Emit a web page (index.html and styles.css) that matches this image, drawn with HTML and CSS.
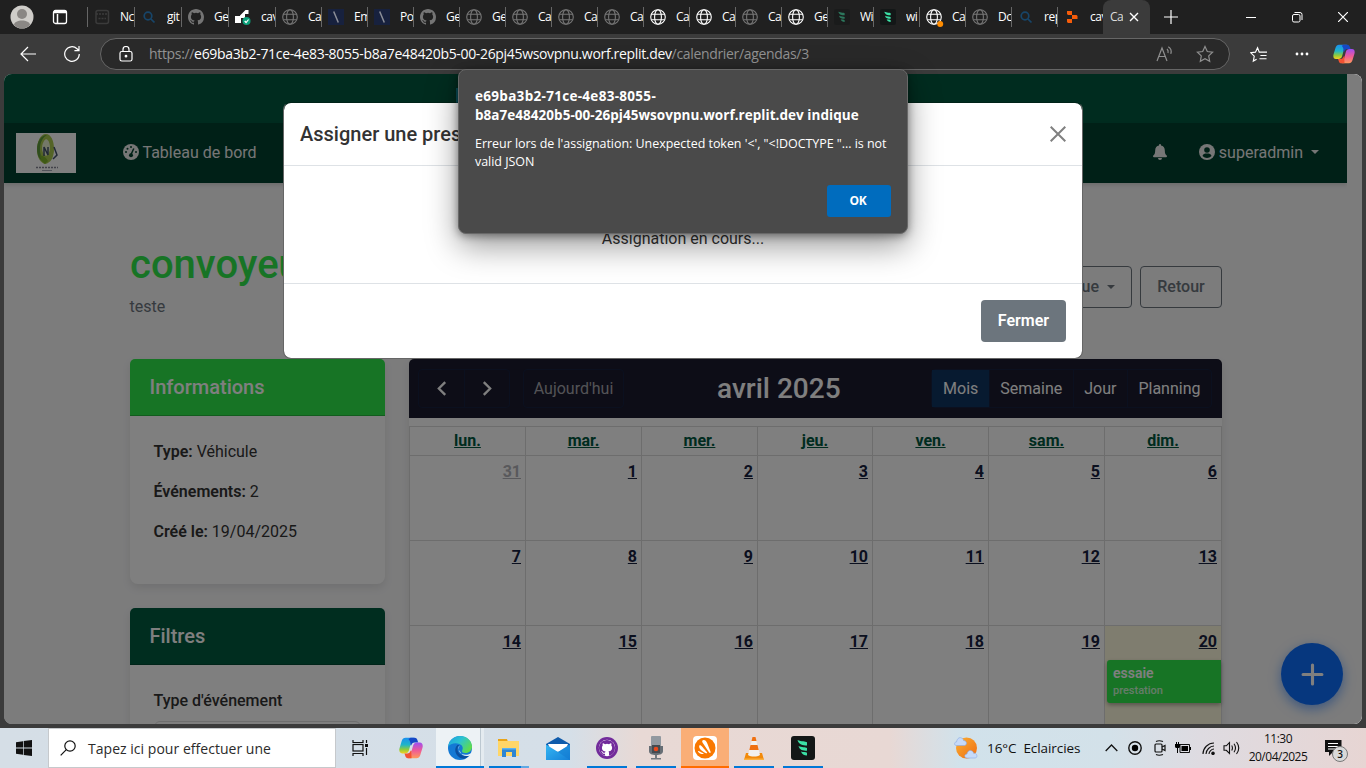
FILE: index.html
```html
<!DOCTYPE html>
<html lang="fr">
<head>
<meta charset="utf-8">
<title>Calendrier</title>
<link rel="stylesheet" href="styles.css">
</head>
<body>
<svg class="defs" width="0" height="0">
  <defs>
    <linearGradient id="cp1" x1="0" y1="0" x2="0" y2="1"><stop offset="0" stop-color="#1b8ff0"/><stop offset=".45" stop-color="#1fb5c8"/><stop offset=".75" stop-color="#8fcb3c"/><stop offset="1" stop-color="#f3d021"/></linearGradient>
    <linearGradient id="cp2" x1="0" y1="0" x2="0" y2="1"><stop offset="0" stop-color="#a04df0"/><stop offset=".5" stop-color="#ee5a97"/><stop offset="1" stop-color="#ff9a5a"/></linearGradient>
    <linearGradient id="edge1" x1="0" y1="0" x2="1" y2=".6"><stop offset="0" stop-color="#1b9de2"/><stop offset=".5" stop-color="#2cc3d0"/><stop offset="1" stop-color="#5fdc4c"/></linearGradient>
    <linearGradient id="sun" x1="0" y1="0" x2="1" y2="1"><stop offset="0" stop-color="#fbb034"/><stop offset="1" stop-color="#ee6c12"/></linearGradient>
    <linearGradient id="mailg" x1="0" y1="0" x2="1" y2="1"><stop offset="0" stop-color="#35b7f3"/><stop offset="1" stop-color="#1480d8"/></linearGradient>
  </defs>
  <symbol id="globe" viewBox="0 0 16 16"><g fill="none" stroke="currentColor" stroke-width="1.1"><circle cx="8" cy="8" r="7.3"/><ellipse cx="8" cy="8" rx="3.4" ry="7.3"/><path d="M1.4 5.3h13.2M1.4 10.7h13.2"/></g></symbol>
  <symbol id="github" viewBox="0 0 16 16"><path fill="currentColor" d="M8 0C3.58 0 0 3.58 0 8c0 3.54 2.29 6.53 5.47 7.59.4.07.55-.17.55-.38v-1.49c-2.23.49-2.69-.94-2.69-.94-.36-.92-.89-1.17-.89-1.17-.72-.5.06-.49.06-.49.8.06 1.23.83 1.23.83.71 1.22 1.87.87 2.33.66.07-.52.28-.87.5-1.07-1.77-.2-3.64-.89-3.64-3.95 0-.87.31-1.59.82-2.15-.08-.2-.36-1.02.08-2.12 0 0 .67-.21 2.2.82a7.6 7.6 0 0 1 4 0c1.53-1.04 2.2-.82 2.2-.82.44 1.1.16 1.92.08 2.12.51.56.82 1.27.82 2.15 0 3.07-1.87 3.75-3.65 3.95.29.25.54.73.54 1.48v2.19c0 .21.15.46.55.38A8 8 0 0 0 16 8c0-4.42-3.58-8-8-8z"/></symbol>
  <symbol id="search" viewBox="0 0 16 16"><g fill="none" stroke="currentColor" stroke-width="1.7"><circle cx="7" cy="7" r="3.8"/><path d="M9.8 9.8 13.500 13.500"/></g></symbol>
  <symbol id="slash" viewBox="0 0 16 16"><path fill="#17213e" d="M0 0h16v16H0z"/><path stroke="#8c8f98" stroke-width="1.5" d="M5.700 2.500 10.300 13.500"/></symbol>
  <symbol id="leaf" viewBox="0 0 24 24"><rect width="24" height="24" rx="3" fill="#131717"/><path fill="#3be0a5" d="M6.500 4c4 1.800 8 1 9.500 2.300v3.200C12 9.500 7.500 8.500 6.500 4zm1 6c3 1.700 7 .8 8.500 2v2.800c-4 0-7.500-.8-8.500-4.800zm2.500 5.500c2 .8 5 .3 6 1.200v2.800c-3 0-5.200-1.200-6-4z"/></symbol>
  <symbol id="copilot" viewBox="0 0 24 22"><path fill="url(#cp1)" d="M6.500.7h9c-2.300 0-3 3.200-4 7l-1.600 5.700c-.6 2-1.900 3-3.900 3H3.200C.6 16.400-.3 14 .6 11L2.700 4C3.400 1.700 4.700.7 6.500.7z"/><path fill="#1648c6" d="M11.500.7h4.200c1.600 0 2.400 1.100 3 3.200l.5 1.700h-3.500c-2 0-2.800 1-3.300 2.700l-1 0C12 4.600 10.200 3 9.500 2z"/><path fill="url(#cp2)" d="M17.500 21.300h-9c2.300 0 3-3.200 4-7l1.600-5.700c.6-2 1.900-3 3.900-3h2.800c2.600 0 3.500 2.400 2.600 5.400L21.300 18c-.7 2.300-2 3.300-3.800 3.300z"/><path fill="#f25232" d="M12.500 21.300H9c-1.600 0-2.400-1.100-3-3.200l-.5-1.700h2.700c2 0 2.800-1 3.300-2.700h1.200c-.8 3 .1 5.600-.2 7.600z"/></symbol>
</svg>

<header class="tabstrip">
  <svg class="avatar" viewBox="0 0 24 24"><circle cx="12" cy="12" r="11.500" fill="#cfcdc9"/><circle cx="12" cy="9" r="5" fill="#8a8784"/><path d="M4 20c0-6 16-6 16 0-4 4.500-12 4.500-16 0z" fill="#8a8784"/></svg>
  <svg class="tabmenu" viewBox="0 0 16 16" fill="none" stroke="#fff" stroke-width="1.300"><rect x="1.500" y="1.500" width="13" height="13" rx="2"/><path d="M2 3.500h12M5.500 5v9" stroke-width="1.500"/><path d="M2 2.500h12" stroke-width="2"/></svg>
  <nav class="tabs">
    <div class="tab wide"><svg class="ti" viewBox="0 0 16 16" fill="none" stroke="#3b3b3b" stroke-width="1.500"><rect x="2" y="1.500" width="12.500" height="13" rx="2"/><path d="M2 5h12.500M4.500 9.500h7.500" stroke-dasharray="2 1"/></svg><span>Nc</span></div>
    <div class="tab wide"><svg class="ti navy"><use href="#search"/></svg><span>git</span></div>
    <div class="tab wide"><svg class="ti dim"><use href="#github"/></svg><span>Ge</span></div>
    <div class="tab wide"><svg class="ti" viewBox="0 0 16 16"><path fill="#fff" d="M5 6.500 9.500 2l1-1h3v4H10v4H6v5H0V7h5z"/><circle cx="11.500" cy="12" r="4" fill="#0aa07a"/><path d="m9.700 12 1.400 1.500 2.400-3" fill="none" stroke="#fff" stroke-width="1.200"/></svg><span>cav</span></div>
    <div class="tab"><svg class="ti dim"><use href="#globe"/></svg><span>Ca</span></div>
    <div class="tab"><svg class="ti"><use href="#slash"/></svg><span>Em</span></div>
    <div class="tab"><svg class="ti"><use href="#slash"/></svg><span>Po</span></div>
    <div class="tab"><svg class="ti dim"><use href="#github"/></svg><span>Ge</span></div>
    <div class="tab"><svg class="ti dim"><use href="#globe"/></svg><span>Ge</span></div>
    <div class="tab"><svg class="ti dim"><use href="#globe"/></svg><span>Ca</span></div>
    <div class="tab"><svg class="ti dim"><use href="#globe"/></svg><span>Ca</span></div>
    <div class="tab"><svg class="ti dim"><use href="#globe"/></svg><span>Ca</span></div>
    <div class="tab"><svg class="ti"><use href="#globe"/></svg><span>Ca</span></div>
    <div class="tab"><svg class="ti"><use href="#globe"/></svg><span>Ca</span></div>
    <div class="tab"><svg class="ti dim"><use href="#globe"/></svg><span>Ca</span></div>
    <div class="tab"><svg class="ti"><use href="#globe"/></svg><span>Ge</span></div>
    <div class="tab"><svg class="ti half"><use href="#leaf"/></svg><span>Wi</span></div>
    <div class="tab"><svg class="ti"><use href="#leaf"/></svg><span>wi</span></div>
    <div class="tab"><svg class="ti over" viewBox="0 0 16 16"><use href="#globe" width="16" height="16"/><circle cx="14.200" cy="14.900" r="3" fill="#ff8c00"/></svg><span>Ca</span></div>
    <div class="tab"><svg class="ti dim"><use href="#globe"/></svg><span>Dc</span></div>
    <div class="tab"><svg class="ti navy"><use href="#search"/></svg><span>rep</span></div>
    <div class="tab last"><svg class="ti" viewBox="0 0 16 16" fill="#f65c0a"><path d="M3 2h5v4H4L3 5zM8 6h4.500l1 1v3H8zM3 10h5v4H4l-1-1z"/></svg><span>cav</span></div>
    <div class="tab active"><span>Ca</span><svg class="tx" viewBox="0 0 10 10" stroke="#fff" stroke-width="1.400"><path d="m1 1 8 8M9 1 1 9"/></svg></div>
  </nav>
  <svg class="newtab" viewBox="0 0 14 14" stroke="#fff" stroke-width="1.200"><path d="M7 0v14M0 7h14"/></svg>
  <div class="winctl">
    <svg viewBox="0 0 10 10" stroke="#fff"><path d="M0 5.500h10"/></svg>
    <svg viewBox="0 0 10 10" stroke="#fff" fill="none" overflow="visible"><rect x=".5" y="2.500" width="7.500" height="7.500" rx="1.500"/><path d="M2.500.5H8a2 2 0 0 1 2 2V8"/></svg>
    <svg viewBox="0 0 10 10" stroke="#fff" stroke-width="1.200"><path d="m0 0 10 10M10 0 0 10"/></svg>
  </div>
</header>

<div class="toolbar">
  <svg class="back" viewBox="0 0 16 16" fill="none" stroke="#fff" stroke-width="1.200"><path d="M16 8H1M8 1 1 8l7 7"/></svg>
  <svg class="reload" viewBox="0 0 16 16" fill="none" stroke="#fff" stroke-width="1.200"><path d="M15.300 8A7.300 7.300 0 1 1 13 2.700l1.700 1.600M15 0v4.600h-4.600"/></svg>
  <div class="address">
    <svg class="lock" viewBox="0 0 14 16" fill="none" stroke="#fff" stroke-width="1.200"><rect x="1" y="5.500" width="12" height="9.500" rx="1.800"/><path d="M4 5.500V3.500a3 3 0 0 1 6 0v2"/><circle cx="7" cy="10.200" r=".8" fill="#fff"/></svg>
    <div class="url">https://<b>e69ba3b2-71ce-4e83-8055-b8a7e48420b5-00-26pj45wsovpnu.worf.replit.dev</b>/calendrier/agendas/3</div>
    <svg class="read" viewBox="0 0 18 16" fill="none" stroke="#8f8f8f" stroke-width="1.200"><path d="M1 15 6 2l5 13M3 10.500h6M11 3c1.200 1 1.400 2.300 1 4M12.300.8c2.600 1.500 3.400 4 2.500 7"/></svg>
    <svg class="star" viewBox="0 0 18 18" fill="none" stroke="#8f8f8f" stroke-width="1.200"><path d="m9 1.500 2.300 5 5.300.7-3.900 3.700 1 5.400L9 13.700l-4.700 2.600 1-5.400L1.400 7.200l5.300-.7z"/></svg>
  </div>
  <svg class="favs" viewBox="0 0 18 18" fill="none" stroke="#fff" stroke-width="1.200"><path d="M11 6.500H9.800L8 1.800 5.800 6.500l-5 .7 3.700 3.600-1 5.200L7 14M11 6.500h7M11 10h6.500M10 13.500h7.500"/></svg>
  <svg class="dots" viewBox="0 0 14 4" fill="#fff"><circle cx="2" cy="2" r="1.400"/><circle cx="7" cy="2" r="1.400"/><circle cx="12" cy="2" r="1.400"/></svg>
  <svg class="cop"><use href="#copilot"/></svg>
</div>

<main class="viewport">
  <div class="page">
    <div class="topbar"><div class="topbtn"></div></div>
    <div class="navbar">
      <svg class="logo" viewBox="0 0 60 40"><path fill="#fff" d="M0 0h60v40H0z"/><path fill="#a9c94e" d="M30 1c-6 0-9 8-9 16s4 13 8 14c6-1 9-7 9-15S35 1 30 1z"/><path fill="#5f9a3a" d="M31 2c-4 2-7 7-7 14 0 6 2 10 5 13-5-1-8-6-8-13S25 2 31 2z"/><path fill="#e8f0d0" d="M30 6c3 1 4 5 4 9s-2 7-4 8c-3-2-4-5-4-8s1-7 4-9z"/><path fill="#7fb52a" d="M24 22c3 1 6 2 8 6l-3 3c-3-2-5-5-5-9z"/><path fill="none" stroke="#43536a" stroke-width="1.500" d="M28 23v-9l4 8v-8M37 26l4-4-3-8"/><path stroke="#858593" stroke-width="1.500" stroke-dasharray="2 1" d="M20 34.500h22"/><path stroke="#a5a9b7" d="M26 37.500h10"/></svg>
      <div class="navlink"><svg viewBox="0 0 16 16"><circle cx="8" cy="8" r="8" fill="currentColor"/><path d="m7.800 11 3-6.500" stroke="#00402d" stroke-width="1.500"/><circle cx="8" cy="11.300" r="2" fill="#00402d"/><g fill="#00402d"><circle cx="8" cy="3" r="1"/><circle cx="4.500" cy="4.700" r="1"/><circle cx="3" cy="8" r="1"/><circle cx="13" cy="8" r="1"/></g></svg>Tableau de bord</div>
      <svg class="bell" viewBox="0 0 14 16" fill="currentColor"><path d="M7 0a1 1 0 0 0-1 1v.6C3.700 2 2.200 3.900 2.200 6.200c0 3-.7 4.300-1.900 5.400-.6.700-.2 1.600.7 1.600h12c.9 0 1.300-.9.700-1.600-1.200-1.100-1.900-2.400-1.900-5.400C11.800 3.900 10.300 2 8 1.600V1a1 1 0 0 0-1-1zM5 14a2 2 0 0 0 4 0z"/></svg>
      <div class="user"><svg viewBox="0 0 16 16"><circle cx="8" cy="8" r="8" fill="currentColor"/><circle cx="8" cy="6" r="2.800" fill="#00402d"/><path d="M3.500 12c.5-2 2-2.500 4.500-2.500s4 .5 4.500 2.500c-2.500 2.500-6.500 2.500-9 0z" fill="#00402d"/></svg>superadmin<i class="caret"></i></div>
    </div>
    <div class="container">
      <div class="heading">
        <div><h1>convoyeur</h1><p>teste</p></div>
        <div class="btns"><span class="btn">Vue publique<i class="caret"></i></span><span class="btn ret">Retour</span></div>
      </div>
      <div class="columns">
        <aside>
          <section class="card info"><h5 class="green">Informations</h5><div class="body"><p><b>Type:</b> Véhicule</p><p><b>Événements:</b> 2</p><p><b>Créé le:</b> 19/04/2025</p></div></section>
          <section class="card"><h5 class="dark">Filtres</h5><div class="body filter"><label>Type d'événement</label><div class="select"></div></div></section>
        </aside>
        <section class="cal">
          <div class="caltool">
            <div class="group nav"><span><svg viewBox="0 0 10 16"><path d="m8.500 2-6 6 6 6"/></svg></span><span><svg viewBox="0 0 10 16"><path d="m1.500 2 6 6-6 6"/></svg></span></div>
            <div class="group today"><span>Aujourd'hui</span></div>
            <h2>avril 2025</h2>
            <div class="group views"><span class="on">Mois</span><span>Semaine</span><span>Jour</span><span>Planning</span></div>
          </div>
          <div class="grid">
            <div class="h">lun.</div><div class="h">mar.</div><div class="h">mer.</div><div class="h">jeu.</div><div class="h">ven.</div><div class="h">sam.</div><div class="h">dim.</div>
            <div class="d off"><u>31</u></div><div class="d"><u>1</u></div><div class="d"><u>2</u></div><div class="d"><u>3</u></div><div class="d"><u>4</u></div><div class="d"><u>5</u></div><div class="d"><u>6</u></div>
            <div class="d"><u>7</u></div><div class="d"><u>8</u></div><div class="d"><u>9</u></div><div class="d"><u>10</u></div><div class="d"><u>11</u></div><div class="d"><u>12</u></div><div class="d"><u>13</u></div>
            <div class="d"><u>14</u></div><div class="d"><u>15</u></div><div class="d"><u>16</u></div><div class="d"><u>17</u></div><div class="d"><u>18</u></div><div class="d"><u>19</u></div><div class="d now"><u>20</u><div class="event"><b>essaie</b><small>prestation</small></div></div>
          </div>
        </section>
      </div>
    </div>
  </div>
  <div class="scroll"></div>
  <div class="fab"><svg viewBox="0 0 22 22" stroke="#fff" stroke-width="3" stroke-linecap="round"><path d="M11 2v18M2 11h18"/></svg></div>
  <div class="backdrop"></div>
  <div class="modal">
    <div class="mhead"><h5>Assigner une prestation</h5><svg viewBox="0 0 16 16" stroke="#808080" stroke-width="2"><path d="m.7.7 14.600 14.600M15.300.7.7 15.300"/></svg></div>
    <div class="mbody">Assignation en cours...</div>
    <div class="mfoot"><span>Fermer</span></div>
  </div>
</main>
<div class="alert">
  <h3><span class="l1">e69ba3b2-71ce-4e83-8055-</span><br><span class="l2">b8a7e48420b5-00-26pj45wsovpnu.worf.replit.dev indique</span></h3>
  <p>Erreur lors de l'assignation: Unexpected token '&lt;', "&lt;!DOCTYPE "... is not<br>valid JSON</p>
  <span class="ok">OK</span>
</div>

<footer class="taskbar">
  <div class="start"><svg viewBox="0 0 16 16" fill="#111"><path d="M0 2.200 7 1.200V7.600H0zM7.700 1.100 16 0v7.600H7.700zM0 8.400h7v6.400l-7-1zM7.700 8.400H16V16l-8.300-1.100z"/></svg></div>
  <div class="find"><svg viewBox="0 0 16 16" fill="none" stroke="#111" stroke-width="1.200"><circle cx="10" cy="6" r="5.200"/><path d="M6.300 9.700.7 15.300"/></svg>Tapez ici pour effectuer une</div>
  <div class="app view"><svg width="17" height="16" viewBox="0 0 17 16" fill="none" stroke="#111" stroke-width="1.200"><path d="M1 0v2.500h10V0M1 16v-2.500h10V16M14.500 0v3M14.500 8v7"/><rect x="1" y="4.500" width="10" height="6.500"/><path fill="#111" stroke="none" d="M13 4h3v3h-3z"/></svg></div>
  <div class="app"><svg width="24" height="22"><use href="#copilot"/></svg></div>
  <div class="app on"><svg width="24" height="24" viewBox="0 0 24 24"><circle cx="12" cy="12" r="12" fill="#1479d4"/><path fill="url(#edge1)" d="M0 11C1 4 6 0 12 0c7 0 12 5 12 10.500 0 4-3 6.500-6.500 6.500-3 0-4-1.300-3.300-2.700 1-1.800.9-4.800-2.700-6.300C7.500 6.500 2 7.500 0 11z"/><path fill="#0b4f9f" d="M9.500 9c-3.500 3-3 9 2 12.500 3 2 7 1.500 10-2.500-5 2.500-12-.5-12-6 0-2 .8-3 2-4z"/><path fill="#eef3f6" d="M12 9.500c-2 1.500-2 6 1.500 8.200 3.500 2.100 7.500 1 10.500-1.200v1.800c-1.300 1-2.200 1-2.800 1.500-4 1-7.700-.5-9-4C9.700 13 10 10.500 12 9.500z"/></svg></div>
  <div class="app run two"><svg width="22" height="20" viewBox="0 0 22 20"><path fill="#e9a418" d="M0 1h9l1 3H0z"/><path fill="#ffd667" d="M0 3h21v15H0z"/><path fill="#2e86d3" d="M4 10h14v9h-4v-5H8v5H4z"/><path fill="#5ab3f0" d="M4 10h14v1.500H4z"/></svg></div>
  <div class="app"><svg width="24" height="23" viewBox="0 0 24 23"><path fill="#0e5bab" d="M0 7 12 0l12 7v5H0z"/><path fill="#fff" d="M2 7h20l-3 7H5z"/><path fill="url(#mailg)" d="M0 7.500 12 15l12-7.500V23H0z"/><path fill="#1279cf" opacity=".5" d="m12 15 12 8V7.500z"/></svg></div>
  <div class="app run"><svg width="22" height="22" viewBox="0 0 22 22"><circle cx="11" cy="11" r="11" fill="#722b9b"/><circle cx="11" cy="11" r="8.200" fill="#fff"/><svg x="3" y="3" width="16" height="16" color="#722b9b"><use href="#github"/></svg></svg></div>
  <div class="app run"><svg width="16" height="24" viewBox="0 0 16 24"><rect x="3" width="10" height="13" rx="1" fill="#9299a0"/><path fill="#676e75" d="M1 10h14v5c0 3-3 4-7 4s-7-1-7-4z"/><path fill="#444a50" d="M4 9h8v8H4z"/><circle cx="8" cy="13" r="2.300" fill="#e8481c"/><path fill="#74797f" d="M7 19h2v3h4v1.500H3V22h4z"/></svg></div>
  <div class="app avast"><svg width="24" height="24" viewBox="0 0 24 24"><rect width="24" height="24" rx="4" fill="#fff"/><circle cx="12" cy="12" r="10.500" fill="#f97800"/><path fill="#fff" d="M10.500 4c3-.5 4 4 7 11.500.6 1.500-.7 2-1.500.7L9.500 6.500C8.700 5.200 9.500 4.200 10.500 4zM6.800 9c1.500 0 4.500 4.500 7 7 .8.900.1 1.600-.8 1.200C9 15.500 4.300 11.500 6.800 9zM5 15c1-.3 3 1.300 5 1.900 1.200.4.500 1.200-.7 1.200C7.500 18 4.700 16.500 5 15z"/></svg></div>
  <div class="app run"><svg width="20" height="23" viewBox="0 0 20 23"><path fill="#f28a0b" d="M2 16h16l2 7H0z"/><path fill="#fbb040" d="M0 21.500h20V23H0z"/><path fill="#f2f0ed" d="M8.500 1h3L16 18c-3 2-9 2-12 0z"/><path fill="#ef7011" d="M8.500 0h3l1 4h-5zM6.500 8h7l1.200 5H5.300z"/></svg></div>
  <div class="app run"><svg width="24" height="24"><use href="#leaf"/></svg></div>
  <div class="tray">
    <svg class="wx" width="24" height="22" viewBox="0 0 24 22"><circle cx="12.500" cy="11" r="10.500" fill="url(#sun)"/><path fill="#c6daf8" stroke="#8aa9e4" stroke-width=".6" d="M2 8.500C0 8 0 5 2.500 5 3 2 5-.3 7.500 1c1.700.7 2 2 2 2.500 3.500 0 4 4.500 1 5z"/><path fill="#c6daf8" stroke="#8aa9e4" stroke-width=".6" d="M13 21c-3 0-3-4 0-4 .4-3 3-4.500 5-3 1.200.7 1.500 1.700 1.500 2.200 4-.4 4.500 4.800 1.500 4.800z"/></svg>
    <span class="temp">16°C&nbsp; Eclaircies</span>
    <svg class="chev" width="13" height="8" viewBox="0 0 13 8" fill="none" stroke="#111" stroke-width="1.300"><path d="m.7 7 5.800-6 5.800 6"/></svg>
    <svg class="rec" width="14" height="14" viewBox="0 0 14 14"><circle cx="7" cy="7" r="6.200" fill="none" stroke="#111" stroke-width="1.400"/><circle cx="7" cy="7" r="3.200"/></svg>
    <svg class="cam" width="12" height="16" viewBox="0 0 12 16" fill="none" stroke="#111" stroke-width="1.200"><rect x="1" y="4" width="7" height="8" rx="1"/><path d="m8 7 3-1.500v5L8 9M2 1.500Q5 0 9 1.500M2 14.500q3 1.500 7 0"/></svg>
    <svg class="bat" width="16" height="12" viewBox="0 0 16 12"><path d="M5 2.500h9.500v8H5z" fill="none" stroke="#111"/><path d="M6.500 4H13v5H6.500zM15 5h1v3h-1zM0 2h5v2.500c0 1-1 1.500-2 1.500v5H2V6C1 6 0 5.500 0 4.500zM1 0h1v2H1zM3 0h1v2H3z"/></svg>
    <svg class="wifi" width="13" height="13" viewBox="0 0 13 13" fill="none" stroke="#111" stroke-width="1.100"><path d="M1 12C1 6 6 1 12 1M4 12c0-4 4-8 8-8M7 12c0-2.500 2.500-5 5-5"/><circle cx="11" cy="11.300" r="1.200" fill="#111"/></svg>
    <svg class="vol" width="17" height="14" viewBox="0 0 17 14" fill="none" stroke="#111" stroke-width="1.100"><path d="M1 4.800h2.300L6.500 1.500v11L3.300 9.300H1zM8.700 4.500q1.500 2.500 0 5M11 2.700q3 4.300 0 8.600M13.500 1q4.500 6 0 12"/></svg>
    <div class="clock"><span>11:30</span><span>20/04/2025</span></div>
    <div class="notif"><svg width="17" height="16" viewBox="0 0 17 16"><path d="M0 0h16.500v12H8l-4 4v-4H0z" fill="#111"/><path stroke="#fff" d="M3 3.500h10M3 6.500h10M3 9h7"/></svg><i>3</i></div>
  </div>
</footer>
</body>
</html>
```
FILE: styles.css
```css
* { box-sizing: border-box; }
body { margin: 0; width: 1366px; height: 768px; overflow: hidden; display: flex; flex-direction: column; background: #3b3b3b; font-family: "Open Sans", "Noto Sans", sans-serif; position: relative; }
svg { flex: none; display: block; }
.defs { position: absolute; }
p, h1, h2, h3, h5 { margin: 0; }

.tabstrip { height: 34px; background: #202020; display: flex; align-items: center; color: #fff; font-size: 12px; flex: none; }
.avatar { width: 24px; height: 24px; margin-left: 10px; }
.tabmenu { width: 16px; height: 16px; margin-left: 18px; }
.tabs { display: flex; margin-left: 19px; border-left: 1px solid #666; height: 20px; align-items: center; }
.tab { width: 46px; height: 20px; padding-left: 6px; display: flex; align-items: center; gap: 10px; border-right: 1px solid #666; overflow: hidden; white-space: nowrap; flex: none; }
.tab.wide { width: 47px; }
.tab.last { border-right: 0; }
.tab span { width: 14px; overflow: hidden; letter-spacing: -0.5px; line-height: 18px; }
.ti { width: 16px; height: 16px; }
.over { overflow: visible; }
.dim { color: #757575; }
.navy { color: #174569; }
.half { opacity: .45; }
.tab.active { height: 34px; width: 47px; border: 0; background: #3b3b3b; border-radius: 8px 8px 0 0; gap: 6px; padding-left: 7px; margin-left: -1px; }
.tab.active span { width: 13px; color: #ddd; }
.tx { width: 10px; height: 10px; }
.newtab { width: 14px; height: 14px; margin-left: 14px; }
.winctl { margin-left: auto; display: flex; gap: 36px; padding-right: 18px; }
.winctl svg { width: 10px; height: 10px; }

.toolbar { height: 40px; flex: none; display: flex; align-items: center; background: #3b3b3b; }
.back { width: 16px; height: 16px; margin-left: 20px; }
.reload { width: 16px; height: 16px; margin-left: 28px; }
.address { width: 1130px; height: 32px; margin-left: 20px; border: 1px solid #666; border-radius: 16px; background: #292929; display: flex; align-items: center; padding: 0 15px 0 18px; }
.lock { width: 14px; height: 16px; }
.url { margin-left: 16px; font-size: 14px; color: #929292; letter-spacing: -0.33px; white-space: nowrap; flex: 1; line-height: 20px; }
.url b { font-weight: 400; color: #fff; }
.read { width: 18px; height: 16px; margin-right: 22px; }
.star { width: 18px; height: 18px; }
.favs { width: 17px; height: 17px; margin-left: 20px; }
.dots { width: 14px; height: 4px; margin-left: 28px; }
.cop { width: 22px; height: 20px; margin-left: 24px; }

.viewport { width: 1358px; height: 650px; margin-left: 4px; flex: none; border-radius: 8px; overflow: hidden; position: relative; display: flex; background: #f8f8f9; font-family: Roboto, sans-serif; font-size: 16px; color: #333; }
.page { width: 1343px; height: 650px; overflow: hidden; }
.scroll { width: 15px; background: #f8f8f9; }
.topbar { height: 49px; background: #00583f; padding: 14px 0 0 452px; }
.topbtn { width: 448px; height: 30px; background: #17a2b8; }
.navbar { height: 60px; background: #00402e; display: flex; align-items: center; padding: 0 28px 0 12px; color: #ededed; box-shadow: 0 2px 4px #0002; }
.logo { width: 60px; height: 40px; }
.navlink { display: flex; align-items: center; gap: 4px; margin-left: 46.5px; padding-bottom: 2px; }
.navlink svg, .user svg { width: 16px; height: 16px; }
.bell { width: 14px; height: 16px; margin-left: auto; margin-bottom: 2px; }
.user { display: flex; align-items: center; gap: 4px; margin-left: 32px; padding-bottom: 2px; }
.caret { display: inline-block; border: 4px solid transparent; border-top-color: currentColor; border-bottom: 0; margin-left: 4px; }
.container { margin: 0 0 0 126px; width: 1092px; }
.heading { display: flex; justify-content: space-between; padding-top: 57px; height: 176px; }
h1 { font-size: 40px; font-weight: 500; line-height: 49px; color: #2ee84b; }
.heading p { color: #6c757d; line-height: 24px; margin-top: 6px; margin-left: -0.5px; }
.btns { display: flex; gap: 8px; padding-top: 26px; }
.btn { height: 42px; border: 1px solid #6c757d; border-radius: 4px; color: #6c757d; padding: 0 16px; font-weight: 500; line-height: 39px; }
.ret { width: 82px; padding: 0; text-align: center; }
.btn .caret { vertical-align: 3px; margin-left: 8px; }
.columns { display: flex; gap: 24px; }
aside { width: 255px; display: flex; flex-direction: column; gap: 24px; }
.card { background: #fff; border-radius: 8px; box-shadow: 0 4px 8px #00000018; height: 225px; overflow: hidden; flex: none; border-top-left-radius: 5px; border-top-right-radius: 5px; }
.card h5 { height: 57px; font-size: 20px; font-weight: 500; line-height: 56px; color: #fff; padding-left: 19.5px; border-bottom: 1px solid #0003; }
.green { background: #2ee84b; }
.dark { background: #005a3f; }
.body { padding: 24px 23.5px; line-height: 24px; }
.body p { margin-bottom: 16px; }
.body b { font-weight: 600; }
.filter label { font-weight: 500; display: block; }
.select { height: 40px; border: 1px solid #dcdcdc; border-radius: 6px; margin-top: 8px; width: 207px; }
.cal { width: 813px; height: 420px; background: #fff; border-radius: 5px 5px 0 0; box-shadow: 0 4px 8px #00000018; }
.caltool { height: 59px; background: #1a1a2e; color: #fff; border-radius: 5px 5px 0 0; display: flex; align-items: center; padding: 0 10px 0 9px; }
.group { display: flex; height: 39px; border-radius: 4px; border: 1px solid #16213e; }
.group span { display: flex; align-items: center; justify-content: center; }
.group span + span { border-left: 1px solid #16213e; }
.nav span { width: 45px; }
.nav svg { width: 11px; height: 17px; fill: none; stroke: #fff; stroke-width: 2.200; }
.today { width: 101px; margin-left: 13px; color: #a6a6ac; }
.today span { width: 100%; }
h2 { font-size: 28px; font-weight: 500; margin-left: 93px; line-height: 34px; white-space: nowrap; }
.views { margin-left: auto; }
.views span { padding: 0 10.5px; }
.views .on { background: #0f3460; padding-left: 11.5px; }
.grid { margin-top: 8px; display: grid; grid-template-columns: 116px 116px 116px 115px 116px 116px 117px; grid-template-rows: 29px 85px 85px 100px; width: 813px; border-left: 1px solid #dadada; border-top: 1px solid #dadada; }
.grid > div { border-right: 1px solid #dadada; border-bottom: 1px solid #dadada; }
.grid .h { text-align: center; color: #00583f; font-weight: 700; text-decoration: underline; line-height: 27px; }
.d { text-align: right; padding: 4px 4px 0; color: #16213e; font-weight: 700; line-height: 24px; }
.off { color: #b2b3b9; }
.now { background: #fffadf; }
.event { height: 43px; margin: 6px -4px 0 -2px; padding: 4px 6px; background: #2ee84b; border-radius: 3px 0 0 3px; box-shadow: 0 2px 4px #0005; text-align: left; color: #fff; display: flex; flex-direction: column; }
.event b { font-size: 14px; font-weight: 600; line-height: 18px; }
.event small { font-size: 11px; font-weight: 500; line-height: 18px; opacity: .75; }
.fab { position: absolute; left: 1277px; top: 569px; width: 62px; height: 62px; border-radius: 50%; background: #0d6efd; display: flex; align-items: center; justify-content: center; box-shadow: 0 4px 12px #0d6efd88; }
.fab svg { width: 23px; height: 23px; }
.backdrop { position: absolute; inset: 0; background: #00000080; }
.modal { position: absolute; left: 279px; top: 28px; width: 800px; height: 257px; border: 1px solid #666; border-top-color: #0003; border-radius: 8px; background: #fff; background-clip: padding-box; }
.mhead { height: 63px; border-bottom: 1px solid #dee2e6; display: flex; align-items: center; justify-content: space-between; padding: 0 16px; }
.mhead h5 { font-size: 20px; font-weight: 500; }
.mhead svg { width: 16px; height: 16px; }
.mbody { height: 117px; padding-top: 61px; line-height: 24px; text-align: center; }
.mfoot { height: 75px; border-top: 1px solid #dee2e6; display: flex; justify-content: flex-end; padding: 16px; }
.mfoot span { width: 85px; height: 42px; background: #6c757d; color: #fff; border-radius: 4px; font-weight: 600; text-align: center; line-height: 41px; }

.alert { position: absolute; left: 458px; top: 69px; width: 450px; height: 165px; border: 1px solid #686868; border-radius: 8px; background: #4a4a4a; color: #fff; padding: 17px 16px; display: flex; flex-direction: column; box-shadow: 0 12px 32px #0006, 0 2px 8px #0006; }
.alert h3 { font-size: 13.500px; font-weight: 700; line-height: 19px; white-space: nowrap; }
.l1 { letter-spacing: 0.3px; }
.l2 { letter-spacing: 0.04px; }
.alert p { font-size: 12.500px; line-height: 18px; margin-top: 10px; letter-spacing: -0.04px; white-space: nowrap; }
.ok { width: 64px; height: 32px; background: #006cbe; border-radius: 3px; align-self: flex-end; margin-top: 14px; padding-right: 2px; text-align: center; font-size: 12px; font-weight: 700; letter-spacing: -0.3px; line-height: 32px; }

.taskbar { margin-top: 4px; height: 40px; display: flex; background: linear-gradient(90deg, #d5dee6 0, #d5dfe8 570px, #e8d9d5 640px, #e8d8d4 890px, #dcdde0 925px, #d1e2eb 960px, #d3e1e9 1110px, #dedbe1 1200px, #e7d5d3 1366px); color: #111; flex: none; }
.start { width: 48px; display: flex; align-items: center; justify-content: center; }
.start svg { width: 16px; height: 16px; }
.find { width: 288px; background: #fff; border: 1px solid #c6c9cc; display: flex; align-items: center; padding-left: 11px; gap: 12px; font-size: 14px; letter-spacing: 0.03px; white-space: nowrap; color: #2b2b2b; }
.find svg { width: 16px; height: 16px; }
.app { width: 48px; margin-right: 1px; display: flex; align-items: center; justify-content: center; flex: none; }
.app.view { width: 49px; margin-right: 2px; }
.app.on { background: linear-gradient(90deg, #edf2f5 44px, #bcc8d1 44px, #bcc8d1 45px, #e4ebf0 45px); border-bottom: 2px solid #0078d7; padding-top: 2px; }
.run { background: linear-gradient(#0078d7, #0078d7) 50% 100% / 40px 2px no-repeat; }
.two { background: linear-gradient(90deg, #0078d7 32px, #60a9e4 32px) 50% 100% / 40px 2px no-repeat; }
.avast { background: #faae76; border-bottom: 2px solid #ff6c00; padding-top: 2px; }
.tray { margin-left: auto; display: flex; align-items: center; padding-right: 17px; }
.temp { font-size: 13.500px; margin-left: 9px; width: 96px; white-space: nowrap; letter-spacing: -0.06px; }
.chev { margin-left: 22px; }
.rec { margin-left: 10px; }
.cam { margin-left: 12px; }
.bat { margin-left: 9px; }
.wifi { margin-left: 11px; }
.vol { margin-left: 8px; }
.clock { width: 60px; margin-left: 8px; display: flex; flex-direction: column; align-items: center; font-size: 12px; line-height: 18px; letter-spacing: -0.5px; white-space: nowrap; }
.notif { margin-left: 17px; position: relative; width: 24px; height: 16px; }
.notif i { position: absolute; left: 7px; top: 6px; width: 16px; height: 16px; border: 1px solid #777; border-radius: 50%; background: #d9d9d9; font: 600 10px/14px "Open Sans", sans-serif; text-align: center; }
```
